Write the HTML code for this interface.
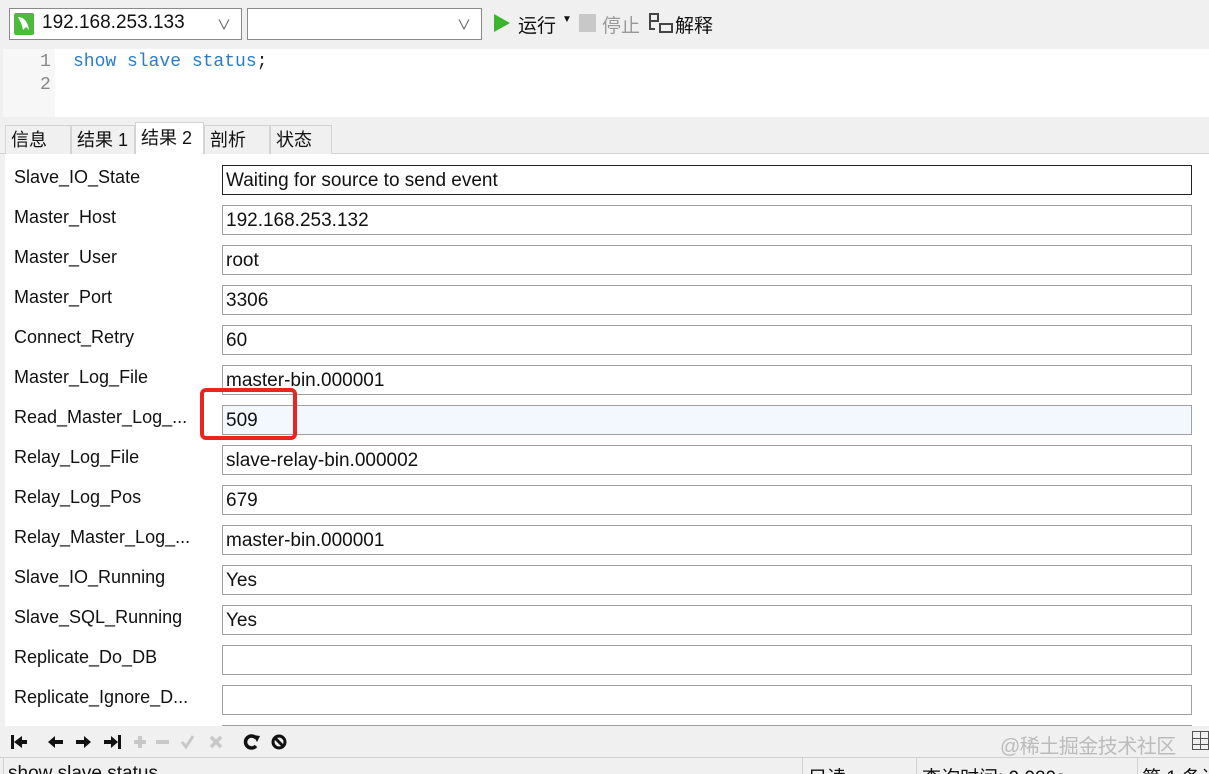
<!DOCTYPE html>
<html><head><meta charset="utf-8"><style>
*{margin:0;padding:0;box-sizing:border-box}
html,body{width:1209px;height:774px;overflow:hidden}
body{background:#f0f0f0;font-family:"Liberation Sans","Noto Sans CJK SC",sans-serif;position:relative;font-size:18px;color:#111}
.a{position:absolute}
.sel{position:absolute;top:8px;height:32px;background:#fff;border:1px solid #8a8a8a}
.chev{position:absolute;right:10px;top:6px;font-size:14px;color:#555}
.lbl{position:absolute;left:14px;font-size:18px;color:#111}
.fld{position:absolute;left:222px;width:970px;height:30px;background:#fff;border:1px solid #a0a0a0;padding-left:3px;line-height:29px;font-size:19px}
.tab{position:absolute;top:125px;height:29px;border:1px solid #d4d4d4;border-bottom:none;background:#f0f0f0;font-size:18px;line-height:29px;padding-left:5px}
.ib{position:absolute;top:735px}
</style></head><body>
<div class="sel" style="left:9px;width:233px">
 <div class="a" style="left:4px;top:4px;width:20px;height:22px;background:#4cbb3c;border-radius:2px"><svg width="20" height="22"><path d="M4 4 C10 4 14 9 15 17 L12 14 L9 17 C8 11 6 8 4 4Z" fill="#fff"/></svg></div>
 <div class="a" style="left:32px;top:3px;font-size:19px">192.168.253.133</div><div class="chev">&#x2228;</div></div>
<div class="sel" style="left:247px;width:235px"><div class="chev">&#x2228;</div></div>
<svg class="a" style="left:493px;top:13px" width="18" height="20"><path d="M1 1 L17 10 L1 19Z" fill="#3cb52e"/></svg>
<div class="a" style="left:518px;top:11px;font-size:19px">运行</div>
<div class="a" style="left:562px;top:14px;font-size:10px">▼</div>
<div class="a" style="left:579px;top:14px;width:17px;height:18px;background:#c8c8c8"></div>
<div class="a" style="left:602px;top:11px;font-size:19px;color:#999">停止</div>
<svg class="a" style="left:648px;top:12px" width="26" height="22"><path d="M2 2h8v7h-8zM2 9v8h5M12 12h12v8h-12z" fill="none" stroke="#444" stroke-width="2"/></svg>
<div class="a" style="left:675px;top:11px;font-size:19px">解释</div>
<div class="a" style="left:3px;top:49px;width:1206px;height:68px;background:#fff"></div>
<div class="a" style="left:3px;top:49px;width:52px;height:68px;background:#f7f7f7"></div>
<div class="a" style="left:40px;top:51px;font-family:'Liberation Mono',monospace;font-size:18px;color:#888;line-height:23px">1<br>2</div>
<div class="a" style="left:73px;top:51px;font-family:'Liberation Mono',monospace;font-size:18px;color:#2a7bd0;line-height:23px">show slave status<span style="color:#222">;</span></div>
<div class="a" style="left:0;top:153px;width:1209px;height:1px;background:#d4d4d4"></div>
<div class="tab" style="left:5px;width:66px">信息</div>
<div class="tab" style="left:71px;width:64px">结果 1</div>
<div class="tab" style="left:204px;width:66px">剖析</div>
<div class="tab" style="left:270px;width:62px">状态</div>
<div class="tab" style="left:135px;width:69px;top:122px;height:33px;background:#fff;line-height:30px">结果 2</div>
<div class="a" style="left:5px;top:154px;width:1204px;height:572px;background:#fff"></div>
<div class="lbl" style="top:167px">Slave_IO_State</div><div class="fld" style="top:165px;border-color:#222">Waiting for source to send event</div>
<div class="lbl" style="top:207px">Master_Host</div><div class="fld" style="top:205px">192.168.253.132</div>
<div class="lbl" style="top:247px">Master_User</div><div class="fld" style="top:245px">root</div>
<div class="lbl" style="top:287px">Master_Port</div><div class="fld" style="top:285px">3306</div>
<div class="lbl" style="top:327px">Connect_Retry</div><div class="fld" style="top:325px">60</div>
<div class="lbl" style="top:367px">Master_Log_File</div><div class="fld" style="top:365px">master-bin.000001</div>
<div class="lbl" style="top:407px">Read_Master_Log_...</div><div class="fld" style="top:405px;background:#f2f8fd">509</div>
<div class="lbl" style="top:447px">Relay_Log_File</div><div class="fld" style="top:445px">slave-relay-bin.000002</div>
<div class="lbl" style="top:487px">Relay_Log_Pos</div><div class="fld" style="top:485px">679</div>
<div class="lbl" style="top:527px">Relay_Master_Log_...</div><div class="fld" style="top:525px">master-bin.000001</div>
<div class="lbl" style="top:567px">Slave_IO_Running</div><div class="fld" style="top:565px">Yes</div>
<div class="lbl" style="top:607px">Slave_SQL_Running</div><div class="fld" style="top:605px">Yes</div>
<div class="lbl" style="top:647px">Replicate_Do_DB</div><div class="fld" style="top:645px"></div>
<div class="lbl" style="top:687px">Replicate_Ignore_D...</div><div class="fld" style="top:685px"></div>
<div class="a" style="left:222px;top:725px;width:970px;height:1px;background:#a0a0a0"></div>
<div class="a" style="left:200px;top:388px;width:97px;height:52px;border:4px solid #e8261f;border-radius:6px"></div>
<svg class="a" style="left:10px;top:733px" width="280" height="18">
<g fill="#111"><rect x="1" y="2" width="3" height="14"/><path d="M4 9 L12 3 V7 H17 V11 H12 V15Z"/>
<path d="M38 9 L45 3 V7 H53 V11 H45 V15Z"/>
<path d="M81 9 L74 3 V7 H66 V11 H74 V15Z"/>
<path d="M108 9 L101 3 V7 H94 V11 H101 V15Z"/><rect x="108" y="2" width="3" height="14"/></g>
<g fill="#c8c8c8"><rect x="124" y="7" width="12" height="4"/><rect x="128" y="3" width="4" height="12"/><rect x="146" y="7" width="13" height="4"/>
<path d="M172 9 L176 14 L183 3" stroke="#c8c8c8" stroke-width="3" fill="none"/><path d="M201 4 L211 14 M211 4 L201 14" stroke="#c8c8c8" stroke-width="3.5"/></g>
<path d="M246 5 A6 6 0 1 0 246 13" stroke="#111" stroke-width="3.5" fill="none"/><path d="M243 2 L250 3 L247 9Z" fill="#111"/>
<circle cx="269" cy="9" r="6" stroke="#111" stroke-width="3" fill="none"/><path d="M265 5 L273 13" stroke="#111" stroke-width="3"/>
</svg>
<div class="a" style="left:1000px;top:730px;font-size:20px;color:#bbb;letter-spacing:-0.5px">@稀土掘金技术社区</div>
<div class="a" style="left:1192px;top:731px;width:17px;height:19px;border:1px solid #555;background:linear-gradient(#555,#555) 0 6px/100% 1px no-repeat,linear-gradient(#555,#555) 0 12px/100% 1px no-repeat,linear-gradient(90deg,#555,#555) 7px 0/1px 100% no-repeat"></div>
<div class="a" style="left:0;top:757px;width:1209px;height:1px;background:#d0d0d0"></div>
<div class="a" style="left:3px;top:758px;width:1px;height:16px;background:#d0d0d0"></div>
<div class="a" style="left:8px;top:763px;font-size:19px">show slave status</div>
<div class="a" style="left:802px;top:758px;width:1px;height:16px;background:#d0d0d0"></div>
<div class="a" style="left:808px;top:763px;font-size:19px">只读</div>
<div class="a" style="left:916px;top:758px;width:1px;height:16px;background:#d0d0d0"></div>
<div class="a" style="left:922px;top:763px;font-size:19px">查询时间: 0.020s</div>
<div class="a" style="left:1137px;top:758px;width:1px;height:16px;background:#d0d0d0"></div>
<div class="a" style="left:1142px;top:763px;font-size:19px;white-space:nowrap">第 1 条记录</div>
</body></html>
